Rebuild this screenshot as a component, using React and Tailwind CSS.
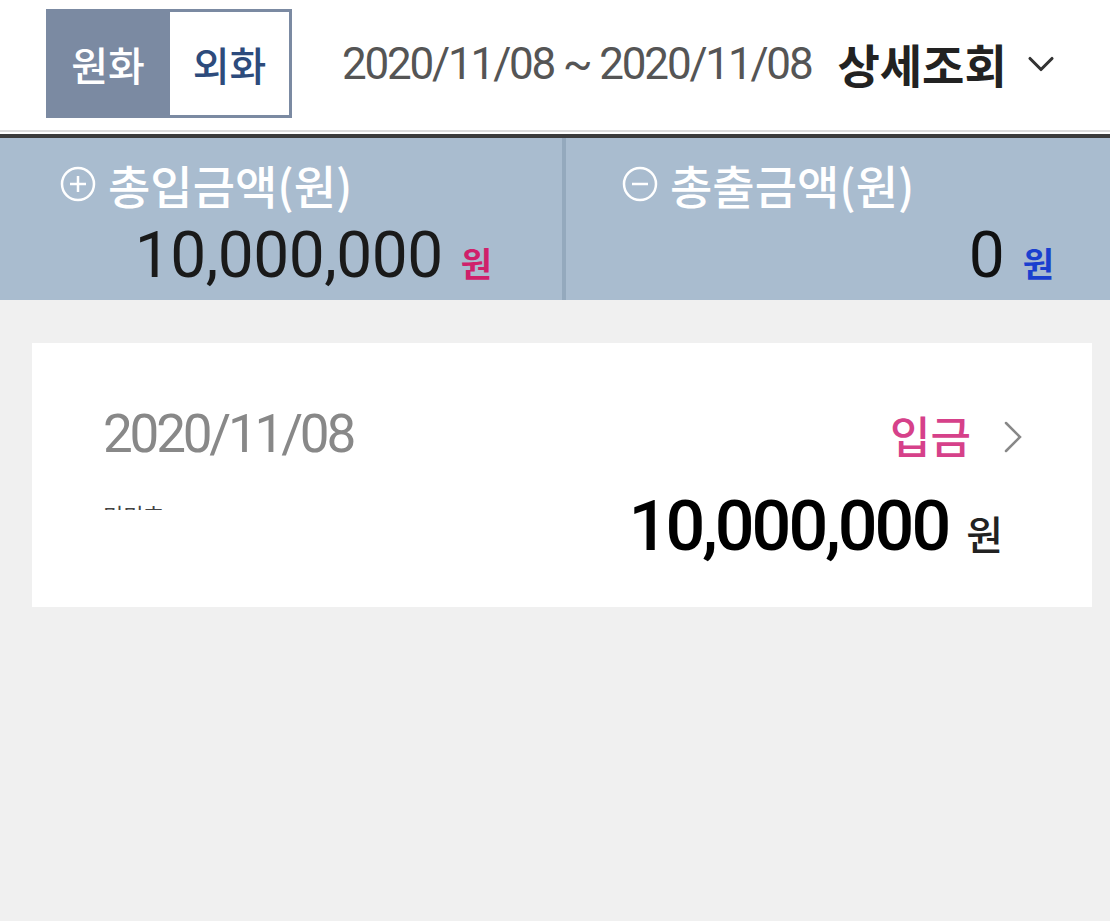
import { ChevronDown } from "lucide-react";

const KR = { fontFamily: '"Noto Sans CJK KR", "Noto Sans", sans-serif' };
const NUM = { fontFamily: 'Roboto, "Noto Sans CJK KR", sans-serif' };

const CircleSign = ({ minus }) => (
  <svg width="36" height="36" viewBox="0 0 36 36" fill="none" stroke="white" strokeWidth="2.5">
    <circle cx="18" cy="18" r="16" />
    <line x1="10" y1="18" x2="26" y2="18" />
    {!minus && <line x1="18" y1="10" x2="18" y2="26" />}
  </svg>
);

const Chevron = () => (
  <svg width="24" height="34" viewBox="0 0 24 34" fill="none" stroke="#888" strokeWidth="2.5" strokeLinecap="round">
    <polyline points="5,3 19,17 5,31" />
  </svg>
);

const App = () => {
  return (
    <div className="w-[1110px] h-[921px] bg-[#f0f0f0] overflow-hidden" style={KR}>
      {/* header */}
      <div className="bg-white h-[130px] flex items-center pl-[46px] pb-[12px]">
        <div className="flex h-[109px] w-[246px] bg-[#7b8aa2] mt-[9px]">
          <div className="w-[124px] flex items-center justify-center text-white text-[40px] font-medium">원화</div>
          <div className="flex-1 my-[3px] mr-[3px] bg-white flex items-center justify-center text-[#2d4b7c] text-[40px] font-medium">
            외화
          </div>
        </div>
        <div className="ml-[50px] mt-[9px] text-[44px] text-[#555] tracking-[-2.2px]" style={NUM}>
          2020/11/08 ~ 2020/11/08
        </div>
        <div className="ml-[26px] mt-[9px] text-[46px] font-bold text-[#222] flex items-center">
          상세조회
          <ChevronDown className="ml-[12px] text-[#333]" size={44} strokeWidth={1.7} />
        </div>
      </div>
      <div className="h-[2px] bg-[#dcdcdc]" />
      <div className="h-[2px] bg-white" />
      <div className="h-[4px] bg-[#3c3c3c]" />

      {/* totals band */}
      <div className="h-[162px] bg-[#a9bccf] flex">
        <div className="w-[562px] pt-[20px] pl-[60px] pr-[70px]">
          <div className="flex items-center text-white text-[46px] font-medium h-[52px]">
            <CircleSign />
            <span className="ml-[12px]">총입금액(원)</span>
          </div>
          <div className="flex items-baseline justify-end mt-[14px]">
            <span className="text-[64px] text-[#1a1a1a] leading-none tracking-[-0.5px]" style={NUM}>10,000,000</span>
            <span className="ml-[18px] text-[34px] font-bold text-[#d0206a] leading-none">원</span>
          </div>
        </div>
        <div className="w-[4px] bg-[#94a9bd]" />
        <div className="flex-1 pt-[20px] pl-[56px] pr-[56px]">
          <div className="flex items-center text-white text-[46px] font-medium h-[52px]">
            <CircleSign minus />
            <span className="ml-[12px]">총출금액(원)</span>
          </div>
          <div className="flex items-baseline justify-end mt-[14px]">
            <span className="text-[64px] text-[#111] leading-none" style={NUM}>0</span>
            <span className="ml-[18px] text-[34px] font-bold text-[#1a3fcf] leading-none">원</span>
          </div>
        </div>
      </div>

      {/* list */}
      <div className="pt-[43px] pl-[32px] pr-[18px]">
        <div className="bg-white h-[264px] pl-[71px] pr-[67px] pt-[64px]">
          <div className="flex items-center justify-between h-[56px]">
            <span className="text-[53px] text-[#888] tracking-[-3.2px]" style={NUM}>2020/11/08</span>
            <div className="flex items-center">
              <span className="text-[44px] font-medium text-[#d6418a]">입금</span>
              <span className="ml-[30px] mt-[4px]">
                <Chevron />
              </span>
            </div>
          </div>
          <div className="flex items-start justify-between mt-[28px]">
            <div className="mt-[12px] h-[7px] overflow-hidden">
              <div className="text-[22px] text-[#444] leading-none">미미흐</div>
            </div>
            <div className="flex items-baseline pr-[22px]">
              <span className="text-[70px] font-medium text-black leading-none tracking-[-3px]" style={NUM}>10,000,000</span>
              <span className="ml-[18px] text-[40px] font-medium text-[#222] leading-none">원</span>
            </div>
          </div>
        </div>
      </div>
    </div>
  );
};

export default App;
